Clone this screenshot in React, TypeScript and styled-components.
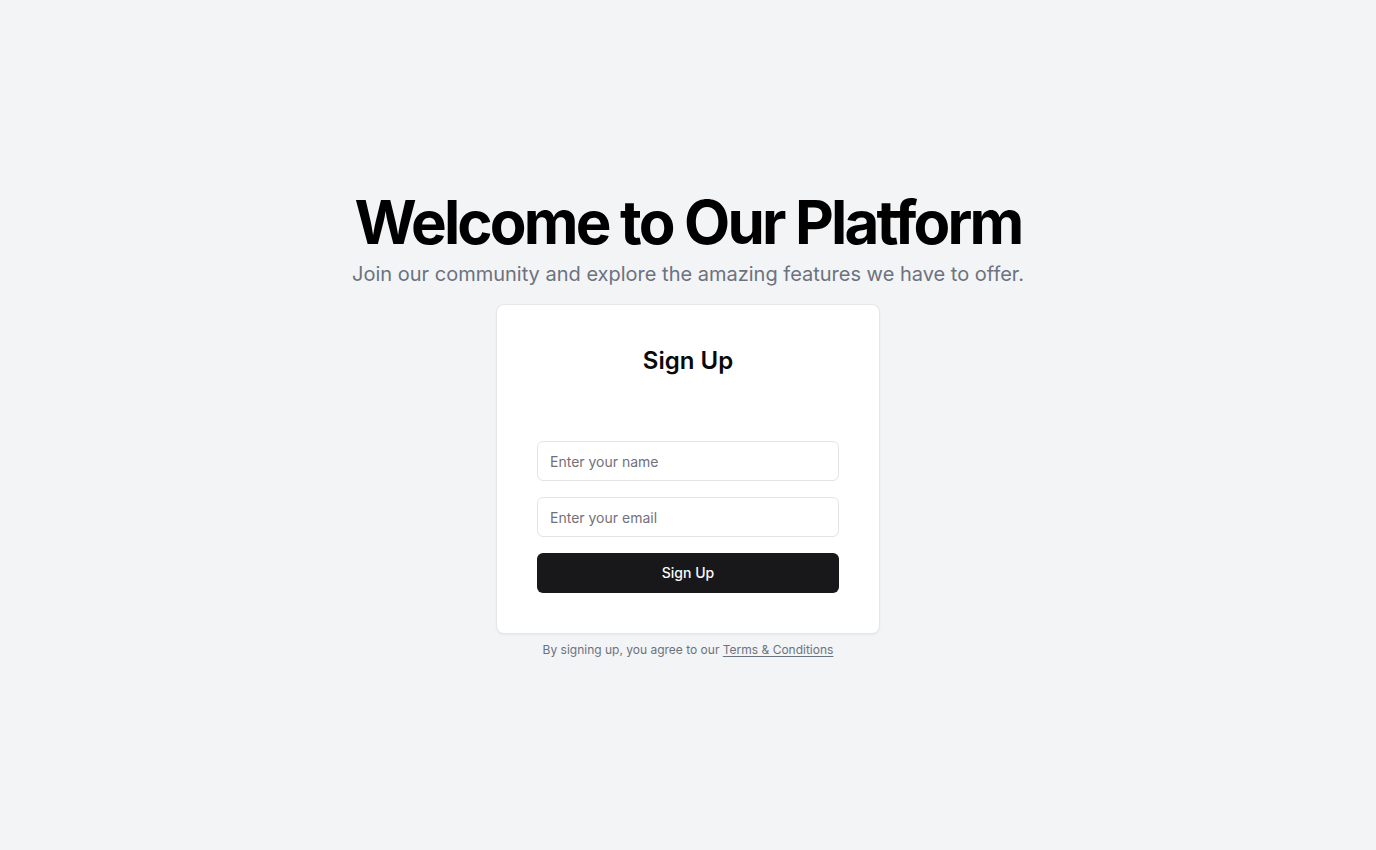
import React from "react";
import styled, { createGlobalStyle } from "styled-components";

const Global = createGlobalStyle`
  html, body { margin: 0; padding: 0; }
  body {
    background: #f3f4f6;
    font-family: Inter, "Noto Sans", Arial, sans-serif;
    color: #09090b;
  }
  * { box-sizing: border-box; }
`;

const Page = styled.main`
  min-height: 100vh;
  display: flex;
  flex-direction: column;
  align-items: center;
  justify-content: center;
`;

const Title = styled.h1`
  margin: 0;
  font-size: 60px;
  line-height: 60px;
  font-weight: 700;
  letter-spacing: -0.047em;
  color: #000;
  text-align: center;
`;

const Subtitle = styled.p`
  margin: 8px 0 0;
  font-size: 20px;
  line-height: 28px;
  color: #6b7280;
  text-align: center;
`;

const Card = styled.section`
  margin-top: 16px;
  width: 384px;
  background: #fff;
  border: 1px solid #e5e7eb;
  border-radius: 8px;
  box-shadow: 0 1px 2px rgba(0, 0, 0, 0.05);
  padding: 40px;
  display: flex;
  flex-direction: column;
`;

const CardTitle = styled.h2`
  margin: 0 0 64px;
  font-size: 24px;
  line-height: 32px;
  font-weight: 600;
  text-align: center;
`;

const Form = styled.form`
  display: flex;
  flex-direction: column;
  gap: 16px;
`;

const Input = styled.input`
  height: 40px;
  width: 100%;
  border: 1px solid #e4e4e7;
  border-radius: 6px;
  padding: 0 12px;
  font-family: inherit;
  font-size: 14px;
  background: #fff;
  color: #09090b;
  &::placeholder { color: #71717a; }
  &:focus { outline: none; }
`;

const Button = styled.button`
  height: 40px;
  width: 100%;
  border: none;
  border-radius: 6px;
  background: #18181b;
  color: #fafafa;
  font-family: inherit;
  font-size: 14px;
  font-weight: 500;
  padding: 0 0 2px;
  cursor: pointer;
`;

const Footer = styled.p`
  margin: 8px 0 0;
  font-size: 12px;
  line-height: 16px;
  color: #6b7280;
  text-align: center;
`;

const Link = styled.a`
  color: #6b7280;
  text-decoration: underline;
  text-underline-offset: 2px;
`;

export default function App() {
  return (
    <>
      <Global />
      <Page>
        <Title>Welcome to Our Platform</Title>
        <Subtitle>Join our community and explore the amazing features we have to offer.</Subtitle>
        <Card>
          <CardTitle>Sign Up</CardTitle>
          <Form onSubmit={(e) => e.preventDefault()}>
            <Input type="text" placeholder="Enter your name" />
            <Input type="email" placeholder="Enter your email" />
            <Button type="submit">Sign Up</Button>
          </Form>
        </Card>
        <Footer>
          By signing up, you agree to our <Link href="#">Terms &amp; Conditions</Link>
        </Footer>
      </Page>
    </>
  );
}
